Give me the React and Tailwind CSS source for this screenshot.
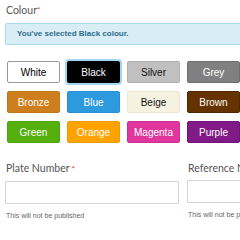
const swatches = [
    { name: 'White', bg: 'bg-white', border: 'border-[#9a9a9a]', text: 'text-black' },
    { name: 'Black', bg: 'bg-black', border: 'border-black', text: 'text-white', selected: true },
    { name: 'Silver', bg: 'bg-[#c0c0c0]', border: 'border-[#b0b0b0]', text: 'text-[#111]' },
    { name: 'Grey', bg: 'bg-[#808080]', border: 'border-[#6e6e6e]', text: 'text-white' },
    { name: 'Bronze', bg: 'bg-[#cd7f1e]', border: 'border-[#c0761a]', text: 'text-white' },
    { name: 'Blue', bg: 'bg-[#2d9ae0]', border: 'border-[#2a8fd2]', text: 'text-white' },
    { name: 'Beige', bg: 'bg-[#f5f2e0]', border: 'border-[#ebe7d2]', text: 'text-[#111]' },
    { name: 'Brown', bg: 'bg-[#653300]', border: 'border-[#4f2800]', text: 'text-white' },
    { name: 'Green', bg: 'bg-[#55b00d]', border: 'border-[#4ca40a]', text: 'text-white' },
    { name: 'Orange', bg: 'bg-[#ffa300]', border: 'border-[#f09a00]', text: 'text-white' },
    { name: 'Magenta', bg: 'bg-[#e0369e]', border: 'border-[#d22f93]', text: 'text-white' },
    { name: 'Purple', bg: 'bg-[#801a86]', border: 'border-[#70127a]', text: 'text-white' },
];

function Field({ label, required }) {
    return (
        <div className="w-[174px] shrink-0">
            <p className="text-[10.5px] leading-[14px] text-[#555] pl-[1px] whitespace-nowrap font-['Lato',sans-serif]">
                {label}
                {required && <span className="text-[#e0402a] text-[8px] ml-[2px]">*</span>}
            </p>
            <div className="mt-[5px] h-[23px] border border-[#d4d4d4] bg-white rounded-[1px]" />
            <p className="mt-[7px] text-[7px] leading-[10px] text-[#666] pl-[1px] whitespace-nowrap font-['Liberation_Sans',sans-serif]">
                This will not be published
            </p>
        </div>
    );
}

export default function App() {
    return (
        <div className="w-[240px] h-[240px] overflow-hidden bg-white pl-[5px]">
            <p className="pt-[3px] pl-[1px] text-[10.5px] leading-[14px] text-[#555] font-['Lato',sans-serif]">
                Colour<span className="text-[#e0402a] text-[8px] align-top">*</span>
            </p>

            <div className="mt-[6px] w-[260px] h-[22px] flex items-center pl-[11px] bg-[#d9edf7] border border-[#a9dbef] rounded-[2px]">
                <span className="text-[8px] font-bold text-[#2f6d8c] font-['Liberation_Sans',sans-serif]">
                    You've selected Black colour.
                </span>
            </div>

            <div className="mt-[16px] ml-[2px] w-[233px] grid grid-cols-4 gap-x-[7px] gap-y-[8px]">
                {swatches.map((s) => (
                    <div
                        key={s.name}
                        className={`h-[22px] flex items-center justify-center border rounded-[2px] text-[10px] font-['Liberation_Sans',sans-serif] ${s.bg} ${s.border} ${s.text} ${s.selected ? 'ring-2 ring-[#a4d6f4]' : ''}`}
                    >
                        {s.name}
                    </div>
                ))}
            </div>

            <div className="mt-[18px] flex gap-[8px]">
                <Field label="Plate Number" required />
                <Field label="Reference Number" />
            </div>
        </div>
    );
}
